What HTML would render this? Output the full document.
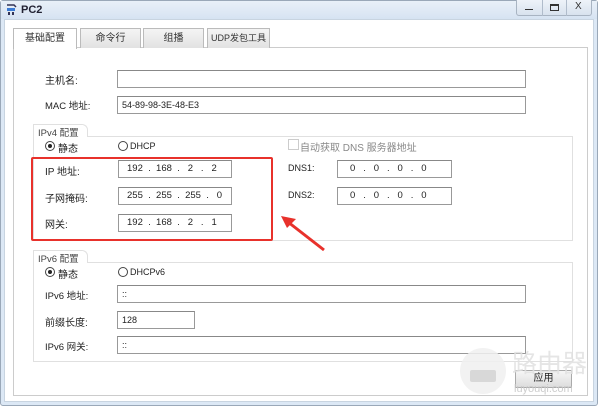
<!DOCTYPE html>
<html><head><meta charset="utf-8"><style>
*{margin:0;padding:0;box-sizing:border-box}
body{width:600px;height:411px;background:#fff;position:relative;overflow:hidden;font-family:"Liberation Sans","Noto Sans CJK SC",sans-serif;font-size:10px;color:#222}
.a{position:absolute}
.win{left:0;top:0;width:598px;height:406px;background:#dce8f5;border:1px solid #9aa8b8;border-radius:3px}
.title{left:1px;top:1px;width:596px;height:18px;background:linear-gradient(#e9f0f8,#d6e3f2)}
.inner{left:4px;top:19px;width:590px;height:383px;background:#fff;border:1px solid #c8d4e0}
.tab{top:28px;height:20px;border:1px solid #bbb;border-bottom:none;background:linear-gradient(#f4f4f4,#e2e2e2);text-align:center;line-height:19px;font-size:10px;color:#333}
.panel{left:13px;top:47px;width:575px;height:349px;border:1px solid #ccc;background:#fff}
.in{background:#fff;border:1px solid #999;border-top-color:#888;height:18px;font-size:9px;line-height:16px;padding-left:4px}
.grp{border:1px solid #e0e0e0}
.lg{font-size:9.5px;color:#444;background:#fff;padding:0 4px}
.lbl{font-size:10px}
.rad{width:10px;height:10px;border:1px solid #444;border-radius:50%}
.ip{font-size:9.5px;line-height:16px;white-space:pre;padding-left:8px}
</style></head><body>
<div class="a win"></div>
<div class="a title"></div>
<svg class="a" style="left:5px;top:3px" width="14" height="14" viewBox="0 0 14 14"><path d="M2 2h7l2 2" stroke="#335" stroke-width="1.5" fill="none"/><rect x="2" y="5" width="8" height="3" fill="#3a7bd5"/><rect x="3" y="9" width="2" height="3" fill="#335"/><rect x="7" y="9" width="2" height="3" fill="#335"/></svg>
<div class="a" style="left:21px;top:4px;font-size:11px;font-weight:bold;color:#223">PC2</div>
<div class="a" style="left:516px;top:0;width:76px;height:16px;border:1px solid #a8b4c2;border-top:none;border-radius:0 0 3px 3px;background:linear-gradient(#eef3f9,#d8e2ee)"></div>
<div class="a" style="left:542px;top:0;width:1px;height:16px;background:#b0bccb"></div>
<div class="a" style="left:566px;top:0;width:1px;height:16px;background:#b0bccb"></div>
<div class="a" style="left:525px;top:9px;width:8px;height:1px;background:#333"></div>
<div class="a" style="left:550px;top:4px;width:9px;height:7px;border:1px solid #333;border-top-width:2px"></div>
<div class="a" style="left:575px;top:1px;font-size:10px;color:#333">X</div>
<div class="a inner"></div>
<div class="a panel"></div>
<div class="a tab" style="left:13px;width:64px;background:#fff;height:21px">基础配置</div>
<div class="a tab" style="left:80px;width:61px">命令行</div>
<div class="a tab" style="left:143px;width:61px">组播</div>
<div class="a tab" style="left:207px;width:63px;font-size:9px">UDP发包工具</div>

<div class="a lbl" style="left:45px;top:72px">主机名:</div>
<div class="a in" style="left:117px;top:70px;width:409px"></div>
<div class="a lbl" style="left:45px;top:98px;font-size:9.5px">MAC 地址:</div>
<div class="a in" style="left:117px;top:96px;width:409px">54-89-98-3E-48-E3</div>

<div class="a grp" style="left:33px;top:136px;width:540px;height:105px"></div>
<div class="a" style="left:33px;top:124px;width:55px;height:13px;border:1px solid #e0e0e0;border-bottom:none;border-radius:0 6px 0 0;background:#fff"></div>
<div class="a lg" style="left:34px;top:125px">IPv4 配置</div>
<div class="a rad" style="left:45px;top:141px"></div><div class="a" style="left:48px;top:144px;width:4px;height:4px;border-radius:50%;background:#222"></div>
<div class="a lbl" style="left:58px;top:140px">静态</div>
<div class="a rad" style="left:118px;top:141px"></div>
<div class="a" style="left:130px;top:141px;font-size:9px">DHCP</div>
<div class="a" style="left:288px;top:139px;width:11px;height:11px;border:1px solid #ccc"></div>
<div class="a" style="left:300px;top:139px;font-size:10px;color:#888">自动获取 DNS 服务器地址</div>
<div class="a lbl" style="left:45px;top:163px">IP 地址:</div>
<div class="a in ip" style="left:118px;top:160px;width:114px">192  .  168  .   2   .   2</div>
<div class="a lbl" style="left:45px;top:190px">子网掩码:</div>
<div class="a in ip" style="left:118px;top:187px;width:114px">255  .  255  .  255  .   0</div>
<div class="a lbl" style="left:45px;top:216px">网关:</div>
<div class="a in ip" style="left:118px;top:214px;width:114px">192  .  168  .   2   .   1</div>
<div class="a" style="left:31px;top:157px;width:242px;height:84px;border:2px solid #e8312b;border-radius:2px"></div>
<div class="a" style="left:288px;top:163px;font-size:9px">DNS1:</div>
<div class="a in ip" style="left:337px;top:160px;width:115px;padding-left:12px">0   .   0   .   0   .   0</div>
<div class="a" style="left:288px;top:190px;font-size:9px">DNS2:</div>
<div class="a in ip" style="left:337px;top:187px;width:115px;padding-left:12px">0   .   0   .   0   .   0</div>
<svg class="a" style="left:278px;top:210px" width="50" height="45"><line x1="46" y1="40" x2="10" y2="12" stroke="#e8312b" stroke-width="3"/><polygon points="3,6 18,9 9,18" fill="#e8312b"/></svg>

<div class="a grp" style="left:33px;top:262px;width:540px;height:100px"></div>
<div class="a" style="left:33px;top:250px;width:55px;height:13px;border:1px solid #e0e0e0;border-bottom:none;border-radius:0 6px 0 0;background:#fff"></div>
<div class="a lg" style="left:34px;top:251px">IPv6 配置</div>
<div class="a rad" style="left:45px;top:267px"></div><div class="a" style="left:48px;top:270px;width:4px;height:4px;border-radius:50%;background:#222"></div>
<div class="a lbl" style="left:58px;top:266px">静态</div>
<div class="a rad" style="left:118px;top:267px"></div>
<div class="a" style="left:130px;top:267px;font-size:9px">DHCPv6</div>
<div class="a lbl" style="left:45px;top:288px;font-size:9.5px">IPv6 地址:</div>
<div class="a in" style="left:117px;top:285px;width:409px">::</div>
<div class="a lbl" style="left:45px;top:314px">前缀长度:</div>
<div class="a in" style="left:117px;top:311px;width:78px">128</div>
<div class="a lbl" style="left:45px;top:339px;font-size:9.5px">IPv6 网关:</div>
<div class="a in" style="left:117px;top:336px;width:409px">::</div>

<div class="a" style="left:515px;top:370px;width:57px;height:18px;border:1px solid #aaa;background:linear-gradient(#f6f6f6,#ddd);text-align:center;line-height:16px;font-size:10px">应用</div>
<div class="a" style="left:460px;top:348px;width:46px;height:46px;border-radius:50%;background:rgba(240,240,240,0.85)"></div>
<div class="a" style="left:470px;top:370px;width:26px;height:12px;border-radius:2px;background:#d8d8d8"></div>
<div class="a" style="left:512px;top:344px;font-size:25px;color:rgba(225,225,225,0.85)">路由器</div>
<div class="a" style="left:514px;top:383px;font-size:11px;color:rgba(200,200,200,0.9)">luyouqi.com</div>
</body></html>
